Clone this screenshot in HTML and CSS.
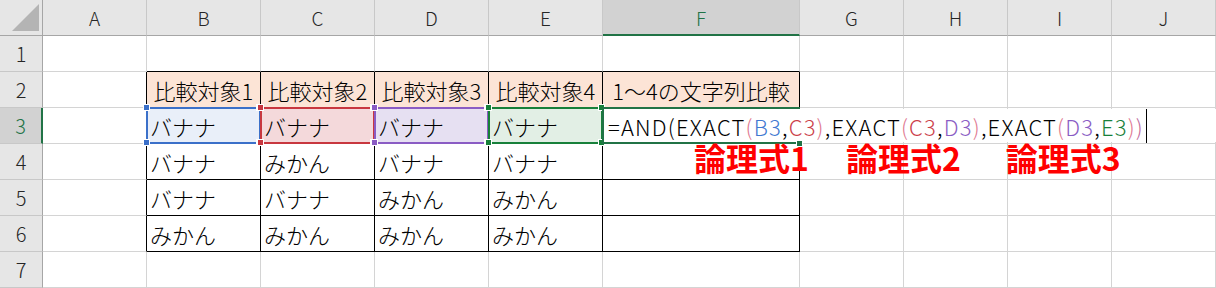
FILE: index.html
```html
<!DOCTYPE html>
<html lang="ja">
<head>
<meta charset="utf-8">
<title>EXACT</title>
<link rel="stylesheet" href="styles.css">
</head>
<body>
<div class="sheet">
  <div class="c corner"><svg width="42" height="35" viewBox="0 0 42 35"><polygon points="12,31 39,31 39,4" fill="#b4b4b4"/></svg></div>
  <div class="c ch">A</div>
  <div class="c ch">B</div>
  <div class="c ch">C</div>
  <div class="c ch">D</div>
  <div class="c ch">E</div>
  <div class="c ch on">F</div>
  <div class="c ch">G</div>
  <div class="c ch">H</div>
  <div class="c ch">I</div>
  <div class="c ch">J</div>

  <div class="c rh">1</div>
  <div class="c"></div>
  <div class="c tt"></div>
  <div class="c tt"></div>
  <div class="c tt"></div>
  <div class="c tt"></div>
  <div class="c tt"></div>
  <div class="c"></div>
  <div class="c"></div>
  <div class="c"></div>
  <div class="c"></div>

  <div class="c rh">2</div>
  <div class="c tl"></div>
  <div class="c tb hd">比較対象1</div>
  <div class="c tb hd">比較対象2</div>
  <div class="c tb hd">比較対象3</div>
  <div class="c tb hd">比較対象4</div>
  <div class="c tb hd">1～4の文字列比較</div>
  <div class="c"></div>
  <div class="c"></div>
  <div class="c"></div>
  <div class="c"></div>

  <div class="c rh on">3</div>
  <div class="c tl"></div>
  <div class="c tb s fill-b">バナナ<div class="box bb"><span class="h t l"></span><span class="h t r"></span><span class="h b l"></span><span class="h b r"></span></div></div>
  <div class="c tb s fill-r">バナナ<div class="box br"><span class="h t l"></span><span class="h t r"></span><span class="h b l"></span><span class="h b r"></span></div></div>
  <div class="c tb s fill-p">バナナ<div class="box bp"><span class="h t l"></span><span class="h t r"></span><span class="h b l"></span><span class="h b r"></span></div></div>
  <div class="c tb s fill-g">バナナ<div class="box bg"><span class="h t l"></span><span class="h t r"></span><span class="h b l"></span><span class="h b r"></span></div></div>
  <div class="c tb s">
    <div class="box act"></div>
    <div class="editor">=AND(EXACT<span class="pa">(</span><span class="kb">B3</span>,<span class="kr">C3</span><span class="pa">)</span>,EXACT<span class="pa">(</span><span class="kr">C3</span>,<span class="kp">D3</span><span class="pa">)</span>,EXACT<span class="pa">(</span><span class="kp">D3</span>,<span class="kg">E3</span><span class="pa">)</span><span class="pc">)</span><span class="caret"></span></div>
    <span class="fillh"></span>
  </div>
  <div class="c"></div>
  <div class="c"></div>
  <div class="c"></div>
  <div class="c"></div>

  <div class="c rh">4</div>
  <div class="c tl"></div>
  <div class="c tb">バナナ</div>
  <div class="c tb">みかん</div>
  <div class="c tb">バナナ</div>
  <div class="c tb">バナナ</div>
  <div class="c tb s">
    <div class="note"><span class="n1">論理式1</span><span class="n2">論理式2</span><span class="n3">論理式3</span></div>
  </div>
  <div class="c"></div>
  <div class="c"></div>
  <div class="c"></div>
  <div class="c"></div>

  <div class="c rh">5</div>
  <div class="c tl"></div>
  <div class="c tb">バナナ</div>
  <div class="c tb">バナナ</div>
  <div class="c tb">みかん</div>
  <div class="c tb">みかん</div>
  <div class="c tb"></div>
  <div class="c"></div>
  <div class="c"></div>
  <div class="c"></div>
  <div class="c"></div>

  <div class="c rh">6</div>
  <div class="c tl"></div>
  <div class="c tb">みかん</div>
  <div class="c tb">みかん</div>
  <div class="c tb">みかん</div>
  <div class="c tb">みかん</div>
  <div class="c tb"></div>
  <div class="c"></div>
  <div class="c"></div>
  <div class="c"></div>
  <div class="c"></div>

  <div class="c rh">7</div>
  <div class="c"></div>
  <div class="c"></div>
  <div class="c"></div>
  <div class="c"></div>
  <div class="c"></div>
  <div class="c"></div>
  <div class="c"></div>
  <div class="c"></div>
  <div class="c"></div>
  <div class="c"></div>
</div>
</body>
</html>
```
FILE: styles.css
```css
* { box-sizing: border-box; }
html, body { margin: 0; padding: 0; background: #fff; }
body {
  font-family: "Noto Sans CJK JP", "Noto Sans", sans-serif;
  overflow: hidden;
}
.sheet {
  display: grid;
  grid-template-columns: 43px 104px 114px 114px 114px 114px 197px 104px 104px 104px 1fr;
  grid-template-rows: repeat(8, 36px);
  width: 1216px;
  height: 288px;
}
.c {
  border-right: 1px solid #d4d4d4;
  border-bottom: 1px solid #d4d4d4;
  display: flex;
  align-items: center;
  padding-left: 3px;
  font-size: 22px;
  font-weight: 300;
  line-height: 1;
  color: #000;
  white-space: nowrap;
}
.corner {
  background: #e6e6e6;
  border-right-color: #a6a6a6;
  border-bottom-color: #a6a6a6;
  padding: 0;
}
.corner svg { display: block; }
.ch {
  background: #e6e6e6;
  border-right-color: #c8c8c8;
  border-bottom-color: #a6a6a6;
  justify-content: center;
  padding: 0;
  font-size: 19px;
  color: #262626;
}
.ch.on {
  background: #d2d2d2;
  color: #217346;
  border-bottom: 2px solid #217346;
}
.rh {
  background: #e6e6e6;
  border-right-color: #a6a6a6;
  border-bottom-color: #c8c8c8;
  justify-content: center;
  padding: 0;
  font-size: 20px;
  color: #262626;
}
.rh.on {
  background: #d2d2d2;
  color: #217346;
  border-right: 2px solid #217346;
}
.tl { border-right-color: #000; }
.tt { border-bottom-color: #000; }
.tb { border-right-color: #000; border-bottom-color: #000; }
.hd { background: #fce4d6; justify-content: center; padding: 0; }

.s { position: relative; }
.fill-b { background: #e9eff9; }
.fill-r { background: #f4d9db; }
.fill-p { background: #e6e0f2; }
.fill-g { background: #e2efe5; }

.box {
  position: absolute;
  left: -1px; top: -1px; right: -1px; bottom: -1px;
  border: 2px solid #000;
}
.bb { border-color: #3b70c9; }
.br { border-color: #c8373f; }
.bp { border-color: #8a5cc4; }
.bg { border-color: #17803a; }
.act { border-color: #217346; }
.bb .h { background: #3b70c9; }
.br .h { background: #c8373f; }
.bp .h { background: #8a5cc4; }
.bg .h { background: #17803a; }
.h {
  position: absolute;
  width: 7px; height: 7px;
  border: 1px solid #fff;
}
.h.t { top: -5px; }
.h.b { bottom: -4px; }
.h.l { left: -5px; }
.h.r { right: -4px; }

.editor {
  position: absolute;
  left: 1px; top: 1px;
  width: 612px; height: 33px;
  background: #fff;
  z-index: 2;
  display: flex;
  align-items: center;
  padding-left: 4px;
  font-size: 22px;
  letter-spacing: 1.2px;
  color: #000;
}
.kb { color: #3f78d1; }
.kr { color: #cc3f4a; }
.kp { color: #8a5cc4; }
.kg { color: #17803a; }
.pa { color: #e07890; }
.pc { color: #c06a9a; }
.caret {
  display: inline-block;
  width: 1px; height: 34px;
  background: #000;
  margin-left: 2px;
}
.fillh {
  position: absolute;
  right: -4px; bottom: -4px;
  width: 7px; height: 7px;
  background: #217346;
  border: 1px solid #fff;
  z-index: 3;
}
.note {
  position: absolute;
  left: 91px; top: -3px;
  z-index: 4;
  display: flex;
  font-size: 32px;
  font-weight: 700;
  line-height: 1;
  color: #ff0000;
}
.n2 { margin-left: 37px; }
.n3 { margin-left: 45px; }
```
